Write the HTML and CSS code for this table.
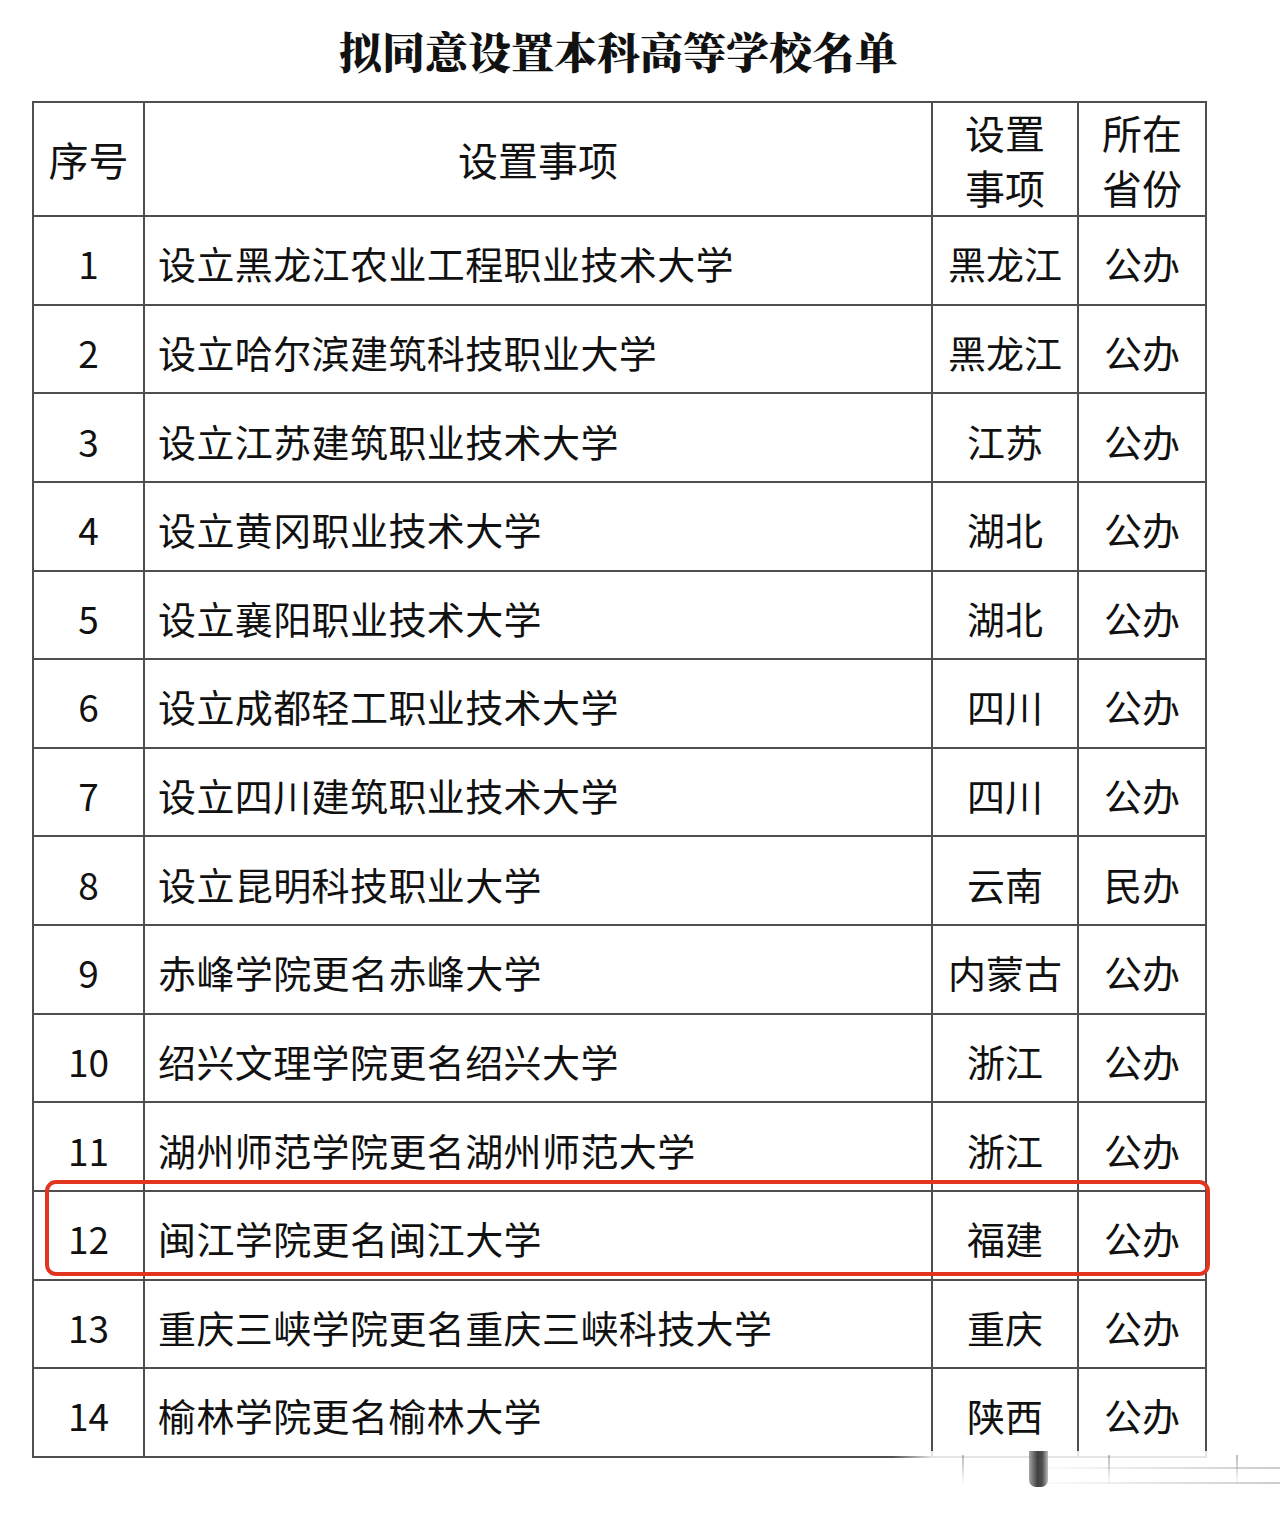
FILE: index.html
```html
<!DOCTYPE html>
<html lang="zh-CN">
<head>
<meta charset="utf-8">
<title>拟同意设置本科高等学校名单</title>
<link rel="stylesheet" href="styles.css">
</head>
<body>
<div class="page">
  <h1 class="title">拟同意设置本科高等学校名单</h1>
  <table class="list">
    <colgroup>
      <col class="c-no"><col class="c-item"><col class="c-prov"><col class="c-type">
    </colgroup>
    <thead>
      <tr class="head">
        <th>序号</th>
        <th>设置事项</th>
        <th class="two">设置<br>事项</th>
        <th class="two">所在<br>省份</th>
      </tr>
    </thead>
    <tbody>
      <tr><td class="no">1</td><td class="item">设立黑龙江农业工程职业技术大学</td><td class="ctr">黑龙江</td><td class="ctr">公办</td></tr>
      <tr><td class="no">2</td><td class="item">设立哈尔滨建筑科技职业大学</td><td class="ctr">黑龙江</td><td class="ctr">公办</td></tr>
      <tr><td class="no">3</td><td class="item">设立江苏建筑职业技术大学</td><td class="ctr">江苏</td><td class="ctr">公办</td></tr>
      <tr><td class="no">4</td><td class="item">设立黄冈职业技术大学</td><td class="ctr">湖北</td><td class="ctr">公办</td></tr>
      <tr><td class="no">5</td><td class="item">设立襄阳职业技术大学</td><td class="ctr">湖北</td><td class="ctr">公办</td></tr>
      <tr><td class="no">6</td><td class="item">设立成都轻工职业技术大学</td><td class="ctr">四川</td><td class="ctr">公办</td></tr>
      <tr><td class="no">7</td><td class="item">设立四川建筑职业技术大学</td><td class="ctr">四川</td><td class="ctr">公办</td></tr>
      <tr><td class="no">8</td><td class="item">设立昆明科技职业大学</td><td class="ctr">云南</td><td class="ctr">民办</td></tr>
      <tr><td class="no">9</td><td class="item">赤峰学院更名赤峰大学</td><td class="ctr">内蒙古</td><td class="ctr">公办</td></tr>
      <tr><td class="no">10</td><td class="item">绍兴文理学院更名绍兴大学</td><td class="ctr">浙江</td><td class="ctr">公办</td></tr>
      <tr><td class="no">11</td><td class="item">湖州师范学院更名湖州师范大学</td><td class="ctr">浙江</td><td class="ctr">公办</td></tr>
      <tr><td class="no">12</td><td class="item">闽江学院更名闽江大学</td><td class="ctr">福建</td><td class="ctr">公办</td></tr>
      <tr><td class="no">13</td><td class="item">重庆三峡学院更名重庆三峡科技大学</td><td class="ctr">重庆</td><td class="ctr">公办</td></tr>
      <tr><td class="no">14</td><td class="item">榆林学院更名榆林大学</td><td class="ctr">陕西</td><td class="ctr">公办</td></tr>
    </tbody>
  </table>
  <div class="highlight"></div>
  <div class="watermark">
    <div class="wm-fade"></div>
    <div class="wm-line wm-l1"></div>
    <div class="wm-line wm-l2"></div>
    <div class="wm-vline wm-v1"></div>
    <div class="wm-vline wm-v2"></div>
    <div class="wm-vline wm-v3"></div>
    <div class="wm-bar"></div>
  </div>
</div>
</body>
</html>
```

FILE: styles.css
```css
html, body {
  margin: 0;
  padding: 0;
  background: #ffffff;
}

body {
  width: 1280px;
  height: 1513px;
  overflow: hidden;
  color: #111111;
  font-family: "Noto Sans CJK SC", "Noto Sans", sans-serif;
}

.page {
  position: relative;
  width: 1173px;
  margin-left: 32px;
}

.title {
  margin: 0;
  height: 101px;
  box-sizing: border-box;
  padding-top: 22px;
  text-align: center;
  font-family: "Noto Serif CJK SC", "Noto Sans CJK SC", serif;
  font-size: 43px;
  line-height: 58px;
  font-weight: 900;
  color: #111111;
  letter-spacing: 0;
}

.list {
  width: 1173px;
  border-collapse: collapse;
  table-layout: fixed;
}

.c-no { width: 111px; }
.c-item { width: 788px; }
.c-prov { width: 146px; }
.c-type { width: 128px; }

.list th,
.list td {
  box-sizing: border-box;
  border: 2px solid #4f4f4f;
  padding: 0;
  font-weight: 400;
  color: #111111;
}

.list th {
  height: 114px;
  font-size: 40px;
  line-height: 55px;
  text-align: center;
  vertical-align: middle;
}

.list th.two {
  padding-top: 2px;
}

.list td {
  height: 88.64px;
  font-size: 38px;
  line-height: 44px;
  vertical-align: middle;
  padding-top: 6px;
}

.list td.no {
  text-align: center;
  font-size: 37px;
}

.list td.item {
  padding-left: 13px;
  letter-spacing: 0.4px;
  white-space: nowrap;
}

.list td.ctr {
  text-align: center;
  white-space: nowrap;
}

.highlight {
  position: absolute;
  left: 13px;
  top: 1180px;
  width: 1165px;
  height: 96px;
  box-sizing: border-box;
  border: 4px solid #e2351f;
  border-radius: 11px;
}

.watermark {
  position: absolute;
  left: 860px;
  top: 1451px;
  width: 400px;
  height: 40px;
}

.wm-fade {
  position: absolute;
  left: 0;
  top: 0;
  width: 400px;
  height: 12px;
  background: linear-gradient(to right, rgba(255,255,255,0) 0px, rgba(255,255,255,0.85) 40px, rgba(255,255,255,0.85) 100%);
}

.wm-line {
  position: absolute;
  right: 8px;
  width: 260px;
  height: 2px;
  background: linear-gradient(to right, rgba(190,190,190,0), rgba(175,175,175,0.65));
}

.wm-l1 { top: 16px; }
.wm-l2 { top: 31px; }

.wm-vline {
  position: absolute;
  top: 4px;
  width: 2px;
  height: 30px;
  background: linear-gradient(to bottom, rgba(120,120,120,0.5), rgba(200,200,200,0));
}

.wm-v1 { left: 70px; }
.wm-v2 { left: 216px; }
.wm-v3 { left: 344px; }

.wm-bar {
  position: absolute;
  left: 137px;
  top: 0;
  width: 19px;
  height: 36px;
  border-radius: 0 0 7px 7px;
  background: linear-gradient(to right, #9a9a9a 0%, #2b2b2b 45%, #3a3a3a 70%, #b5b5b5 100%);
  opacity: 0.9;
}
```
